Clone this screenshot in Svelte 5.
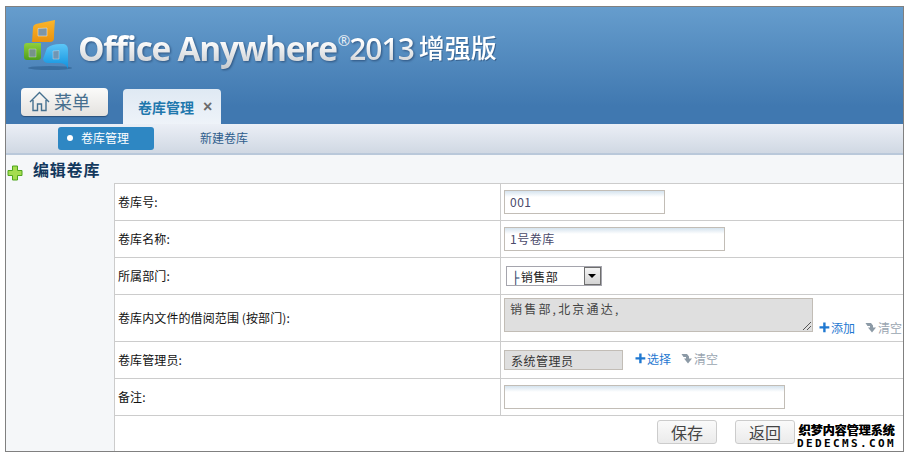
<script>
    const rows = [
        { label: "卷库号:", kind: "num" },
        { label: "卷库名称:", kind: "name" },
        { label: "所属部门:", kind: "dept" },
        { label: "卷库内文件的借阅范围 (按部门):", kind: "scope" },
        { label: "卷库管理员:", kind: "admin" },
        { label: "备注:", kind: "note" }
    ];
</script>

{#snippet plus()}
    <svg class="mini" width="11" height="11" viewBox="0 0 11 11"><path d="M4.2 0.5h2.4v3.7h3.7v2.4H6.6v3.7H4.2V6.6H0.5V4.2h3.7z" fill="#1f78d1"/></svg>
{/snippet}

{#snippet clear()}
    <svg class="mini" width="12" height="11" viewBox="0 0 12 11"><path d="M0.5 1h5.5l2 2.5v2H11L7 10.5 3 5.5h2V4H2.5z" fill="#8c9aa6"/></svg>
{/snippet}

<div class="page">
    <div class="frame">
        <header class="banner">
            <div class="brand">
                <svg class="logo" width="56" height="56" viewBox="0 0 56 56">
                    <defs>
                        <linearGradient id="lo" x1="0" y1="0" x2="0" y2="1"><stop offset="0" stop-color="#fbb62c"/><stop offset="1" stop-color="#e8920f"/></linearGradient>
                        <linearGradient id="lg" x1="0" y1="0" x2="0" y2="1"><stop offset="0" stop-color="#8fd03c"/><stop offset="1" stop-color="#4f9e1c"/></linearGradient>
                        <linearGradient id="lb" x1="0" y1="0" x2="0" y2="1"><stop offset="0" stop-color="#5cc6f7"/><stop offset="1" stop-color="#0e90dd"/></linearGradient>
                    </defs>
                    <ellipse cx="30" cy="49" rx="22" ry="2" fill="#2c5d8c" opacity="0.6"/>
                    <path d="M13 9Q13 6 16 5L35 1Q34 12 34 19Q34 23 30 23H12z" fill="url(#lo)"/>
                    <path d="M18 9.500L27 9V17H18z" fill="#7d96a8" stroke="#fff" stroke-opacity="0.4"/>
                    <path d="M4 27Q4 24 7 24H21V38Q21 41 18 41H7Q4 41 4 38z" fill="url(#lg)"/>
                    <path d="M9 30H16V38H9z" fill="#76938a" stroke="#fff" stroke-opacity="0.3"/>
                    <path d="M27 29Q32 25 40 25H44Q48 26 48 31V50Q46 44 40 44H28Q24 44 23 40z" fill="url(#lb)"/>
                    <path d="M33 32L39 31.500V40H33z" fill="#6f96b4" stroke="#fff" stroke-opacity="0.3"/>
                </svg>
                <span class="product">Office Anywhere</span>
                <sup class="reg">®</sup>
                <span class="year">2013</span>
                <span class="edition">增强版</span>
            </div>
            <div class="tabs">
                <button class="menu-btn">
                    <svg width="21" height="21" viewBox="0 0 21 21" fill="none" stroke="#44708f" stroke-width="1.4"><path d="M1 11L10.5 1.500 20 11M4 9V19.500H8.500V13H12.500V19.500H17V9"/></svg>
                    <span>菜单</span>
                </button>
                <div class="tab">
                    <span>卷库管理</span>
                    <span class="tab-x">×</span>
                </div>
            </div>
        </header>

        <nav class="subnav">
            <span class="sub active"><i class="dot"></i>卷库管理</span>
            <span class="sub">新建卷库</span>
        </nav>

        <main class="body">
            <div class="title">
                <svg width="16" height="16" viewBox="0 0 16 16"><path d="M5.500 1h5v4.500H15v5h-4.500V15h-5v-4.500H1v-5h4.500z" fill="#a5dc50" stroke="#4fa51e" stroke-width="1"/></svg>
                <h1>编辑卷库</h1>
            </div>
            <div class="table">
                {#each rows as row}
                    <div class="row" class:tall={row.kind === "scope"}>
                        <div class="label">{row.label}</div>
                        <div class="field">
                            {#if row.kind === "num"}
                                <div class="input w160">001</div>
                            {:else if row.kind === "name"}
                                <div class="input w220">1号卷库</div>
                            {:else if row.kind === "dept"}
                                <div class="select">
                                    <span class="select-text"><span class="tree">├</span>销售部</span>
                                    <span class="select-arrow"></span>
                                </div>
                            {:else if row.kind === "scope"}
                                <div class="area">销售部,北京通达,
                                    <svg class="grip" width="8" height="8" viewBox="0 0 8 8" stroke="#555" fill="none"><path d="M0 8L8 0M4 8L8 4"/></svg>
                                </div>
                                <span class="link blue scope-link">{@render plus()}添加</span>
                                <span class="link grey scope-link">{@render clear()}清空</span>
                            {:else if row.kind === "admin"}
                                <div class="readonly">系统管理员</div>
                                <span class="link blue">{@render plus()}选择</span>
                                <span class="link grey">{@render clear()}清空</span>
                            {:else}
                                <div class="input w280"></div>
                            {/if}
                        </div>
                    </div>
                {/each}
                <div class="actions">
                    <button class="btn">保存</button>
                    <button class="btn">返回</button>
                </div>
            </div>
        </main>
        <div class="watermark">
            <span class="wm-top">织梦内容管理系统</span>
            <span class="wm-bottom">DEDECMS.COM</span>
        </div>
    </div>
</div>

<style>
    :global(body) {
        margin: 0;
        background: #ffffff;
    }

    .page {
        width: 907px;
        height: 457px;
        padding: 6px 3px 0 5px;
        box-sizing: border-box;
        overflow: hidden;
        font-family: "Noto Sans CJK SC", "Liberation Sans", sans-serif;
        color: #222222;
    }

    .frame {
        position: relative;
        height: 446px;
        box-sizing: border-box;
        border: 1px solid #808080;
        display: flex;
        flex-direction: column;
        background: #f5f7f9;
    }

    /* banner */
    .banner {
        height: 117px;
        flex: none;
        display: flex;
        flex-direction: column;
        background: linear-gradient(#669dcd, #4078b0 85%);
    }

    .brand {
        height: 79px;
        display: flex;
        align-items: center;
        padding-left: 14px;
    }

    .logo {
        margin-right: 2px;
        margin-top: 1px;
    }

    .product {
        font-family: "Open Sans", sans-serif;
        font-weight: 700;
        font-size: 33.500px;
        line-height: 44px;
        letter-spacing: -1.3px;
        margin-top: 2px;
        background: linear-gradient(#ffffff 30%, #c4c8cc);
        -webkit-background-clip: text;
        background-clip: text;
        color: transparent;
        filter: drop-shadow(1px 1px 1px rgba(30, 60, 100, 0.7));
    }

    .reg {
        font-family: "Open Sans", sans-serif;
        font-size: 15px;
        color: #e8eef4;
        margin: -14px 0 0 1px;
    }

    .year {
        font-family: "Open Sans", sans-serif;
        font-weight: 600;
        font-size: 30px;
        letter-spacing: -1px;
        margin-left: -1px;
        margin-top: 3px;
        background: linear-gradient(#ffffff 30%, #c4c8cc);
        -webkit-background-clip: text;
        background-clip: text;
        color: transparent;
        filter: drop-shadow(1px 1px 1px rgba(30, 60, 100, 0.7));
    }

    .edition {
        font-size: 26px;
        font-weight: 500;
        color: #ffffff;
        margin-left: 5px;
        filter: drop-shadow(1px 1px 0 rgba(30, 60, 100, 0.5));
    }

    .tabs {
        flex: 1;
        display: flex;
        align-items: flex-end;
        padding-left: 15px;
    }

    .menu-btn {
        width: 87px;
        height: 28px;
        margin-bottom: 8px;
        padding: 0 0 2px 8px;
        display: flex;
        align-items: center;
        gap: 4px;
        border: none;
        border-radius: 4px;
        background: linear-gradient(#fbfbfa, #e4e2df);
        box-shadow: 0 1px 1px rgba(20, 40, 70, 0.5);
        color: #476f8e;
        font-family: inherit;
        font-size: 18px;
        font-weight: 400;
    }

    .tab {
        width: 98px;
        height: 35px;
        margin-left: 15px;
        box-sizing: border-box;
        padding: 0 0 0 15px;
        display: flex;
        align-items: center;
        border-radius: 4px 4px 0 0;
        background: linear-gradient(#dfe9f3, #eef3f9);
        color: #1f78ad;
        font-size: 14px;
        font-weight: 700;
    }

    .tab-x {
        margin-left: 9px;
        margin-top: 1px;
        color: #6c6c6c;
        font-family: "Liberation Sans", sans-serif;
        font-size: 16px;
        font-weight: 700;
    }

    /* sub navigation */
    .subnav {
        flex: none;
        box-sizing: border-box;
        padding: 3px 0 0 52px;
        display: flex;
        align-items: flex-start;
        background: linear-gradient(#ebeff6, #d0d8e3);
        border-bottom: 2px solid;
        border-image: linear-gradient(#8a8f96 50%, #b9c8da 50%) 1;
        height: 31px;
    }

    .sub {
        width: 96px;
        height: 23px;
        padding: 0 0 2px 46px;
        box-sizing: border-box;
        display: flex;
        align-items: center;
        color: #2f5d8c;
        font-size: 12px;
        white-space: nowrap;
    }

    .sub.active {
        width: 96px;
        padding-left: 9px;
        gap: 8px;
        border-radius: 3px;
        background: #2e87c3;
        color: #ffffff;
    }

    .dot {
        width: 6px;
        height: 6px;
        border-radius: 50%;
        background: #ffffff;
    }

    /* form body */
    .body {
        flex: 1;
        display: flex;
        flex-direction: column;
        min-height: 0;
    }

    .title {
        height: 28px;
        flex: none;
        display: flex;
        align-items: center;
        padding-left: 1px;
        gap: 10px;
    }

    .title svg {
        margin-top: 7px;
    }

    .title h1 {
        margin: 0;
        color: #13395e;
        font-size: 16px;
        line-height: 22px;
        font-weight: 700;
        letter-spacing: 0.8px;
    }

    .table {
        flex: 1;
        min-height: 0;
        margin-left: 108px;
        background: #ffffff;
        border-left: 1px solid #cccccc;
        border-top: 1px solid #cccccc;
    }

    .row {
        height: 37px;
        box-sizing: border-box;
        display: flex;
        border-bottom: 1px solid #cccccc;
    }

    .row.tall {
        height: 47px;
    }

    .label {
        width: 386px;
        flex: none;
        box-sizing: border-box;
        padding: 0 0 2px 3px;
        display: flex;
        align-items: center;
        border-right: 1px solid #cccccc;
        font-size: 12px;
        letter-spacing: 0.1px;
        color: #111111;
    }

    .field {
        flex: 1;
        padding-left: 3px;
        display: flex;
        align-items: center;
        white-space: nowrap;
        font-size: 12px;
    }

    .input {
        height: 24px;
        box-sizing: border-box;
        padding-left: 5px;
        border: 1px solid #c2bdb6;
        background: linear-gradient(#d5e3ee, #ffffff 6px);
        color: #4a4a6a;
        font-size: 12px;
        line-height: 22px;
        letter-spacing: 0.500px;
    }

    .w160 { width: 161px; }
    .w220 { width: 221px; }
    .w280 { width: 281px; }

    .select {
        width: 96px;
        height: 20px;
        margin-left: 2px;
        box-sizing: border-box;
        display: flex;
        align-items: center;
        justify-content: space-between;
        border: 1px solid #a5a5ad;
        background: #ffffff;
        font-size: 12px;
    }

    .select-text {
        padding-left: 5px;
        letter-spacing: 0.500px;
    }

    .tree {
        font-family: "DejaVu Sans Mono", monospace;
        margin-right: 1px;
        color: #2a3f6a;
    }

    .select-arrow {
        width: 17px;
        height: 18px;
        box-sizing: border-box;
        position: relative;
        border: 1px solid #6e6e6e;
        background: linear-gradient(#f4f4f4, #d4d4d4);
    }

    .select-arrow::after {
        content: "";
        position: absolute;
        left: 3px;
        top: 6px;
        border: 4px solid transparent;
        border-top: 4px solid #000000;
        border-bottom: 0;
    }

    .area {
        position: relative;
        width: 309px;
        height: 34px;
        box-sizing: border-box;
        align-self: flex-start;
        margin-top: 3px;
        padding: 0 0 0 5px;
        border: 1px solid #c2bdb6;
        background: #dfdfdf;
        color: #444444;
        font-size: 12px;
        line-height: 20px;
        letter-spacing: 2.2px;
    }

    .grip {
        position: absolute;
        right: 1px;
        bottom: 1px;
    }

    .link {
        display: inline-flex;
        align-items: center;
        gap: 1px;
        font-size: 12px;
    }

    .scope-link {
        align-self: flex-end;
        margin-bottom: 5px;
    }

    .blue {
        color: #1f78d1;
        margin-left: 6px;
    }

    .blue svg {
        margin-right: 0;
    }

    .grey {
        color: #9aa5b0;
        margin-left: 11px;
    }

    .readonly {
        width: 119px;
        height: 20px;
        box-sizing: border-box;
        padding-left: 6px;
        border: 1px solid #c2bdb6;
        background: #dfdfdf;
        color: #333333;
        font-size: 12px;
        line-height: 19px;
        letter-spacing: 0.500px;
    }

    .readonly + .blue {
        margin-left: 12px;
        margin-top: -3px;
    }

    .readonly ~ .grey {
        margin-left: 10px;
        margin-top: -3px;
    }

    .scope-link.grey {
        margin-left: 10px;
    }

    .actions {
        height: 34px;
        box-sizing: border-box;
        display: flex;
        justify-content: flex-end;
        gap: 18px;
        padding: 4px 108px 0 0;
        background: #ffffff;
    }

    .btn {
        width: 60px;
        height: 24px;
        padding: 0;
        box-sizing: border-box;
        border: 1px solid #cccccc;
        border-radius: 3px;
        background: linear-gradient(#fafafa, #ebebeb);
        color: #444444;
        font-family: inherit;
        font-size: 16px;
        line-height: 20px;
    }

    /* watermark over the bottom corner */
    .watermark {
        position: absolute;
        right: 6px;
        bottom: 0;
        width: 101px;
        height: 28px;
        display: flex;
        flex-direction: column;
        align-items: center;
        background: #ffffff;
        color: #000000;
        line-height: 14px;
    }

    .wm-top {
        font-size: 12px;
        font-weight: 700;
        white-space: nowrap;
        text-shadow: 0.4px 0 0 #000000;
    }

    .wm-bottom {
        font-family: "DejaVu Sans Mono", monospace;
        font-weight: 700;
        font-size: 11px;
        letter-spacing: 2.4px;
    }

    .mini {
        flex: none;
    }
</style>
